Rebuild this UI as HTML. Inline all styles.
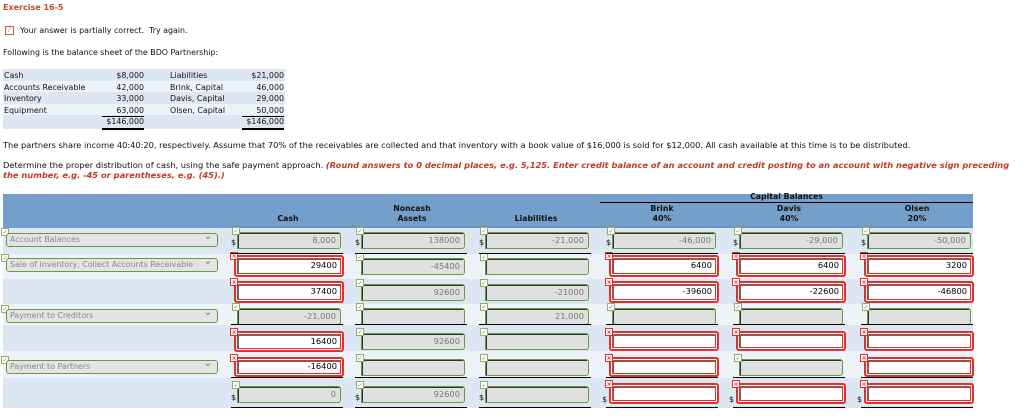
<!DOCTYPE html>
<html><head><meta charset="utf-8"><style>
*{margin:0;padding:0;box-sizing:border-box}
body{width:1024px;height:416px;background:#fff;font-family:"DejaVu Sans","Liberation Sans",sans-serif;font-size:7.9px;color:#111;position:relative;overflow:hidden}
.a{position:absolute;white-space:nowrap}
.bs{position:absolute;left:3px;width:282px;height:11.5px}
.hd{position:absolute;left:3px;top:194px;width:970px;height:34px;background:#759fcb}
.rw{position:absolute;left:3px;width:970px}
.h{position:absolute;font-weight:bold;text-align:center;font-size:7.8px;line-height:10px}
.g,.r{position:absolute;width:104px;height:17px;text-align:right;padding-right:4px;line-height:15px;font-size:8.3px}
.g{background:#e0e0e0;border:1px solid #6a9a3a;border-radius:0 3px 3px 0;box-shadow:inset 1px 1px 0 #333;color:#777}
.r{background:#fff;border:2px solid #e0322a;border-radius:3px;box-shadow:inset 0 0 0 1px #fff,inset 0 0 0 2px #e0322a,inset 3px 3px 0 #666;color:#000;padding-right:5px}
.ck,.xk{position:absolute;width:8px;height:8px;font-size:6px;line-height:7px;text-align:center;background:#fff}
.ck{border:1px solid #8fb06a;color:#5a8a2a}
.xk{border:1px solid #e0322a;color:#e0322a;font-weight:bold}
.sel{position:absolute;left:6px;width:212px;height:14px;border:1px solid #6a9a3a;border-radius:3px;background:#e4e4e4;color:#888;font-size:7.9px;line-height:12px;padding-left:3px}
.sel:after{content:"⌄";position:absolute;right:5px;top:-3px;color:#777;font-size:10px}
.d{position:absolute;font-size:8px}
.ul{position:absolute;height:1px;background:#000;width:112px}
</style></head><body>
<div class="a" style="left:3px;top:3px;color:#c0501f;font-weight:bold;font-size:8px">Exercise 16-5</div>
<div class="a" style="left:5px;top:26px;width:9px;height:9px;border:1px solid #d06030;color:#d06030;font-size:7px;line-height:7px;text-align:center">⁄</div>
<div class="a" style="left:20px;top:26px">Your answer is partially correct.&nbsp; Try again.</div>
<div class="a" style="left:3px;top:48px">Following is the balance sheet of the BDO Partnership:</div>
<div class="bs" style="top:69px;background:#dde7f3"></div>
<div class="bs" style="top:80.5px;background:#eef3fa"></div>
<div class="bs" style="top:92px;background:#dde7f3"></div>
<div class="bs" style="top:103.5px;background:#eef3fa"></div>
<div class="bs" style="top:115px;background:#dde7f3;height:14px"></div>
<div class="a" style="left:4px;top:70px;line-height:11.5px">Cash<br>Accounts Receivable<br>Inventory<br>Equipment</div>
<div class="a" style="left:100px;width:44px;top:70px;line-height:11.5px;text-align:right">$8,000<br>42,000<br>33,000<br>63,000<br>$146,000</div>
<div class="a" style="left:170px;top:70px;line-height:11.5px">Liabilities<br>Brink, Capital<br>Davis, Capital<br>Olsen, Capital</div>
<div class="a" style="left:238px;width:46px;top:70px;line-height:11.5px;text-align:right">$21,000<br>46,000<br>29,000<br>50,000<br>$146,000</div>
<div class="a" style="left:102px;top:116px;width:42px;height:1px;background:#000"></div>
<div class="a" style="left:102px;top:128px;width:42px;height:2px;background:#000"></div>
<div class="a" style="left:242px;top:116px;width:42px;height:1px;background:#000"></div>
<div class="a" style="left:242px;top:128px;width:42px;height:2px;background:#000"></div>
<div class="a" style="left:3px;top:140px;font-size:8.25px">The partners share income 40:40:20, respectively. Assume that 70% of the receivables are collected and that inventory with a book value of $16,000 is sold for $12,000. All cash available at this time is to be distributed.</div>
<div class="a" style="left:3px;top:160px;line-height:10px;font-size:8.3px">Determine the proper distribution of cash, using the safe payment approach. <b style="color:#c0392b;font-style:italic">(Round answers to 0 decimal places, e.g. 5,125. Enter credit balance of an account and credit posting to an account with negative sign preceding</b><br><b style="color:#c0392b;font-style:italic">the number, e.g. -45 or parentheses, e.g. (45).)</b></div>

<div class="hd"></div>
<div class="a" style="left:600px;top:202px;width:373px;height:1px;background:#000"></div>
<div class="h" style="left:600px;width:373px;top:192px">Capital Balances</div>
<div class="h" style="left:232px;width:112px;top:214px">Cash</div>
<div class="h" style="left:356px;width:112px;top:204px">Noncash<br>Assets</div>
<div class="h" style="left:480px;width:112px;top:214px">Liabilities</div>
<div class="h" style="left:606px;width:112px;top:204px">Brink<br>40%</div>
<div class="h" style="left:733px;width:112px;top:204px">Davis<br>40%</div>
<div class="h" style="left:861px;width:112px;top:204px">Olsen<br>20%</div>
<div class="a" style="left:232px;top:226px;width:741px;height:2px;background:#6f94bd"></div>

<div class="rw" style="top:228px;height:26px;background:#dde7f3"></div>
<div class="rw" style="top:254px;height:25px;background:#eef3fa"></div>
<div class="rw" style="top:279px;height:25px;background:#dde7f3"></div>
<div class="rw" style="top:304px;height:21px;background:#eef3fa"></div>
<div class="rw" style="top:325px;height:26px;background:#dde7f3"></div>
<div class="rw" style="top:351px;height:27px;background:#eef3fa"></div>
<div class="rw" style="top:378px;height:30px;background:#dde7f3"></div>

<div class="ck" style="left:1px;top:228px">✓</div><div class="sel" style="top:233px">Account Balances</div>
<div class="ck" style="left:1px;top:254px">✓</div><div class="sel" style="top:258px">Sale of Inventory, Collect Accounts Receivable</div>
<div class="ck" style="left:1px;top:305px">✓</div><div class="sel" style="top:309px">Payment to Creditors</div>
<div class="ck" style="left:1px;top:356px">✓</div><div class="sel" style="top:360px">Payment to Partners</div>

<div class="g" style="left:237px;top:232px">8,000</div><div class="ck" style="left:232px;top:227px">✓</div><div class="d" style="left:231px;top:238px">$</div>
<div class="g" style="left:361px;top:232px">138000</div><div class="ck" style="left:356px;top:227px">✓</div><div class="d" style="left:355px;top:238px">$</div>
<div class="g" style="left:485px;top:232px">-21,000</div><div class="ck" style="left:480px;top:227px">✓</div><div class="d" style="left:479px;top:238px">$</div>
<div class="g" style="left:612px;top:232px">-46,000</div><div class="ck" style="left:607px;top:227px">✓</div><div class="d" style="left:606px;top:238px">$</div>
<div class="g" style="left:739px;top:232px">-29,000</div><div class="ck" style="left:734px;top:227px">✓</div><div class="d" style="left:733px;top:238px">$</div>
<div class="g" style="left:867px;top:232px">-50,000</div><div class="ck" style="left:862px;top:227px">✓</div><div class="d" style="left:861px;top:238px">$</div>

<div class="r" style="left:234px;top:255px;width:110px;height:22px;line-height:17px">29400</div><div class="xk" style="left:230px;top:252px">×</div>
<div class="g" style="left:361px;top:258px">-45400</div><div class="ck" style="left:356px;top:253px">✓</div>
<div class="g" style="left:485px;top:258px"></div><div class="ck" style="left:480px;top:253px">✓</div>
<div class="r" style="left:609px;top:255px;width:110px;height:22px;line-height:17px">6400</div><div class="xk" style="left:605px;top:252px">×</div>
<div class="r" style="left:736px;top:255px;width:110px;height:22px;line-height:17px">6400</div><div class="xk" style="left:732px;top:252px">×</div>
<div class="r" style="left:864px;top:255px;width:110px;height:22px;line-height:17px">3200</div><div class="xk" style="left:860px;top:252px">×</div>

<div class="r" style="left:234px;top:281px;width:110px;height:22px;line-height:17px">37400</div><div class="xk" style="left:230px;top:278px">×</div>
<div class="g" style="left:361px;top:284px">92600</div><div class="ck" style="left:356px;top:279px">✓</div>
<div class="g" style="left:485px;top:284px">-21000</div><div class="ck" style="left:480px;top:279px">✓</div>
<div class="r" style="left:609px;top:281px;width:110px;height:22px;line-height:17px">-39600</div><div class="xk" style="left:605px;top:278px">×</div>
<div class="r" style="left:736px;top:281px;width:110px;height:22px;line-height:17px">-22600</div><div class="xk" style="left:732px;top:278px">×</div>
<div class="r" style="left:864px;top:281px;width:110px;height:22px;line-height:17px">-46800</div><div class="xk" style="left:860px;top:278px">×</div>

<div class="g" style="left:237px;top:308px">-21,000</div><div class="ck" style="left:232px;top:303px">✓</div>
<div class="g" style="left:361px;top:308px"></div><div class="ck" style="left:356px;top:303px">✓</div>
<div class="g" style="left:485px;top:308px">21,000</div><div class="ck" style="left:480px;top:303px">✓</div>
<div class="g" style="left:612px;top:308px"></div><div class="ck" style="left:607px;top:303px">✓</div>
<div class="g" style="left:739px;top:308px"></div><div class="ck" style="left:734px;top:303px">✓</div>
<div class="g" style="left:867px;top:308px"></div><div class="ck" style="left:862px;top:303px">✓</div>

<div class="r" style="left:234px;top:331px;width:110px;height:21px;line-height:16px">16400</div><div class="xk" style="left:230px;top:328px">×</div>
<div class="g" style="left:361px;top:333px">92600</div><div class="ck" style="left:356px;top:328px">✓</div>
<div class="g" style="left:485px;top:333px"></div><div class="ck" style="left:480px;top:328px">✓</div>
<div class="r" style="left:609px;top:331px;width:110px;height:20px"></div><div class="xk" style="left:605px;top:328px">×</div>
<div class="r" style="left:736px;top:331px;width:110px;height:20px"></div><div class="xk" style="left:732px;top:328px">×</div>
<div class="r" style="left:864px;top:331px;width:110px;height:20px"></div><div class="xk" style="left:860px;top:328px">×</div>

<div class="r" style="left:234px;top:357px;width:110px;height:20px;line-height:15px">-16400</div><div class="xk" style="left:230px;top:354px">×</div>
<div class="g" style="left:361px;top:359px"></div><div class="ck" style="left:356px;top:354px">✓</div>
<div class="g" style="left:485px;top:359px"></div><div class="ck" style="left:480px;top:354px">✓</div>
<div class="r" style="left:609px;top:357px;width:110px;height:20px"></div><div class="xk" style="left:605px;top:354px">×</div>
<div class="g" style="left:739px;top:359px"></div><div class="ck" style="left:734px;top:354px">✓</div>
<div class="r" style="left:864px;top:357px;width:110px;height:20px"></div><div class="xk" style="left:860px;top:354px">×</div>

<div class="g" style="left:237px;top:386px">0</div><div class="ck" style="left:232px;top:381px">✓</div><div class="d" style="left:231px;top:393px">$</div>
<div class="g" style="left:361px;top:386px">92600</div><div class="ck" style="left:356px;top:381px">✓</div><div class="d" style="left:355px;top:393px">$</div>
<div class="g" style="left:485px;top:386px"></div><div class="ck" style="left:480px;top:381px">✓</div><div class="d" style="left:479px;top:393px">$</div>
<div class="r" style="left:609px;top:383px;width:110px;height:21px"></div><div class="xk" style="left:605px;top:380px">×</div><div class="d" style="left:602px;top:395px">$</div>
<div class="r" style="left:736px;top:383px;width:110px;height:21px"></div><div class="xk" style="left:732px;top:380px">×</div><div class="d" style="left:729px;top:395px">$</div>
<div class="r" style="left:864px;top:383px;width:110px;height:21px"></div><div class="xk" style="left:860px;top:380px">×</div><div class="d" style="left:857px;top:395px">$</div>

<div class="ul" style="left:231px;top:253px"></div><div class="ul" style="left:355px;top:253px"></div><div class="ul" style="left:479px;top:253px"></div><div class="ul" style="left:606px;top:253px"></div><div class="ul" style="left:733px;top:253px"></div><div class="ul" style="left:861px;top:253px"></div>
<div class="ul" style="left:231px;top:324px"></div><div class="ul" style="left:355px;top:324px"></div><div class="ul" style="left:479px;top:324px"></div><div class="ul" style="left:606px;top:324px"></div><div class="ul" style="left:733px;top:324px"></div><div class="ul" style="left:861px;top:324px"></div>
<div class="ul" style="left:231px;top:377px"></div><div class="ul" style="left:355px;top:377px"></div><div class="ul" style="left:479px;top:377px"></div><div class="ul" style="left:606px;top:377px"></div><div class="ul" style="left:733px;top:377px"></div><div class="ul" style="left:861px;top:377px"></div>
<div class="ul" style="left:231px;top:407px"></div><div class="ul" style="left:355px;top:407px"></div><div class="ul" style="left:479px;top:407px"></div><div class="ul" style="left:606px;top:407px"></div><div class="ul" style="left:733px;top:407px"></div><div class="ul" style="left:861px;top:407px"></div>
</body></html>
